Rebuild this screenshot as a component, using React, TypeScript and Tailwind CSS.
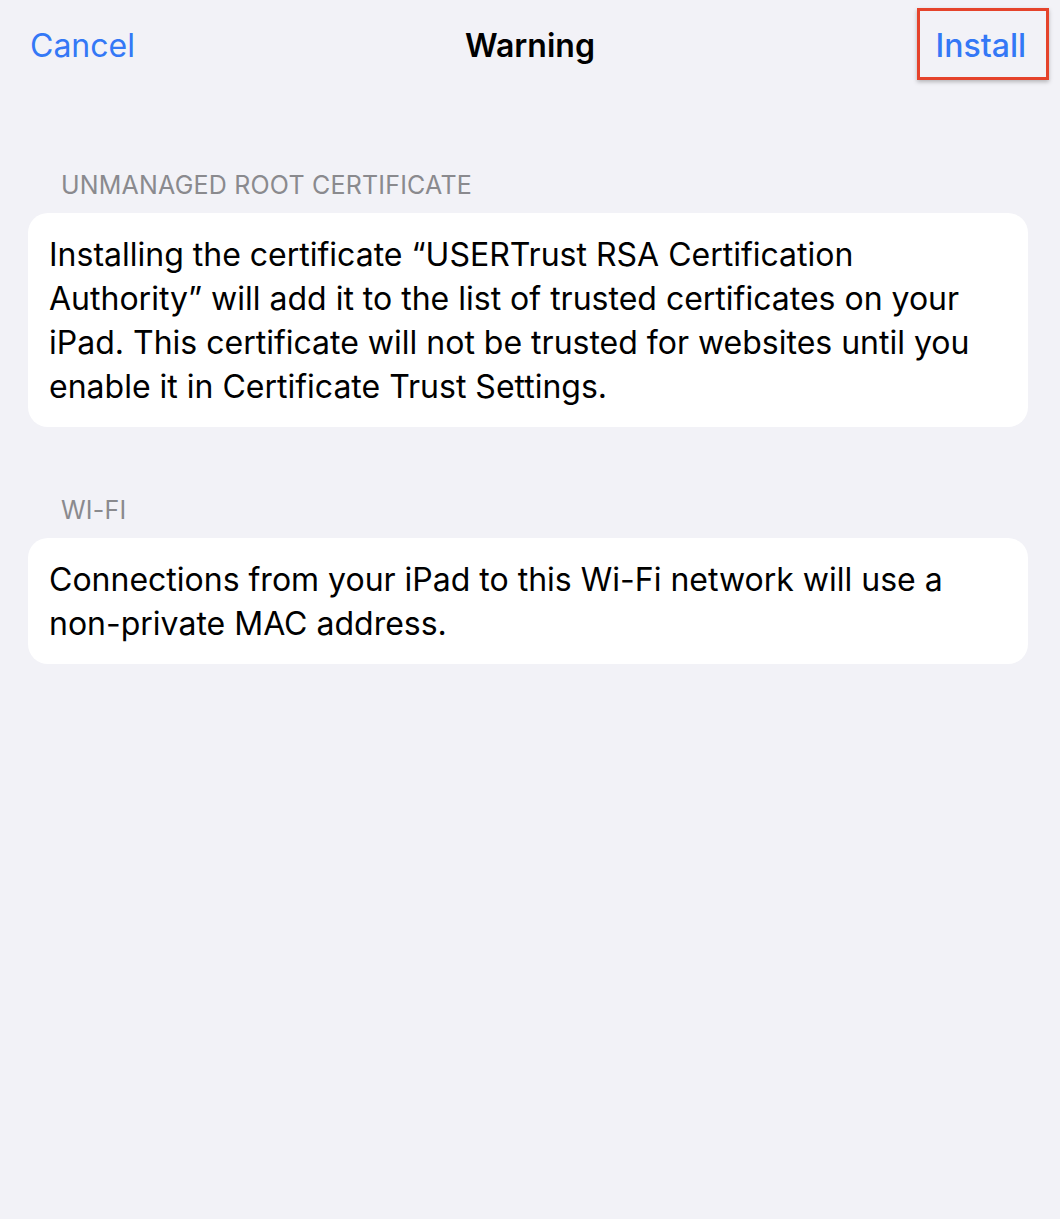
import React from "react";

const Section = ({ title, children }: { title: string; children: React.ReactNode }) => {
	return (
		<div className="flex flex-col">
			<p className="pl-[61px] text-[25px] leading-[30px] text-[#8a8a8e] tracking-[0.2px]">{title}</p>
			<div className="ml-[28px] mr-[32px] mt-[13px] rounded-[20px] bg-white px-[21px] pt-[20px] pb-[18px]">
				<p className="text-[32px] leading-[44px] text-black">{children}</p>
			</div>
		</div>
	);
};

export default function App() {
	return (
		<div
			className="min-h-[1219px] w-full bg-[#f2f2f7]"
			style={{ fontFamily: "Inter, 'Noto Sans', sans-serif" }}
		>
			<div className="relative flex h-[92px] items-center justify-between pl-[30px] pr-[34px]">
				<span className="text-[32px] text-[#3478f6]">Cancel</span>
				<span className="absolute left-1/2 -translate-x-1/2 text-[32px] font-semibold text-black">Warning</span>
				<div className="relative">
					<span className="text-[32px] font-medium text-[#3478f6]">Install</span>
					<div className="absolute -left-[18px] -right-[23px] -top-[14px] -bottom-[10px] border-[3px] border-[#e5432b] shadow-[0_2px_4px_rgba(0,0,0,0.25)]" />
				</div>
			</div>

			<div className="mt-[78px] flex flex-col gap-[68px]">
				<Section title="UNMANAGED ROOT CERTIFICATE">
					Installing the certificate “USERTrust RSA Certification Authority” will add it to the list of trusted
					certificates on your iPad. This certificate will not be trusted for websites until you enable it in
					Certificate Trust Settings.
				</Section>
				<Section title="WI-FI">
					Connections from your iPad to this Wi-Fi network will use a{" "}
					<span className="whitespace-nowrap">non-private</span> MAC address.
				</Section>
			</div>
		</div>
	);
}
